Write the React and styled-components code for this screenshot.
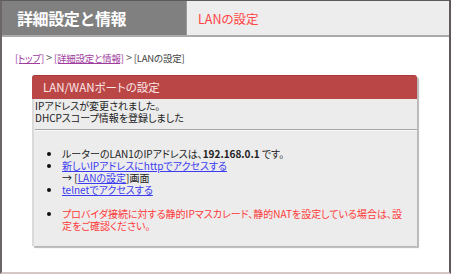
import React from "react";
import styled, { createGlobalStyle } from "styled-components";

const Global = createGlobalStyle`
  html, body { margin: 0; padding: 0; background: #fff; }
  body {
    font-family: "Noto Sans CJK JP", "Noto Sans", sans-serif;
    font-feature-settings: "palt";
  }
`;

const Frame = styled.div`
  width: 451px;
  height: 274px;
  box-sizing: border-box;
  border-top: 1px solid #5e5a5a;
  border-left: 2px solid #6a6666;
  border-right: 2px solid #5e5a5a;
  border-bottom: 2px solid #d6c6c6;
  background: #fff;
  overflow: hidden;
`;

const Header = styled.div`
  display: flex;
  height: 34px;
  border-bottom: 2px solid #ababab;
`;

const TitleTab = styled.div`
  width: 169px;
  background: #808080;
  border-right: 1px solid #9a9a9a;
  display: flex;
  align-items: center;
  padding-left: 15px;
  color: #fff;
  font-weight: bold;
  font-size: 16px;
  letter-spacing: -0.4px;
  font-feature-settings: normal;
`;

const SubTab = styled.div`
  flex: 1;
  background: #ededed;
  display: flex;
  align-items: center;
  padding-left: 11px;
  color: #ff4545;
  font-size: 12.5px;
  padding-top: 1px;
`;

const Content = styled.div`
  padding: 14px 0 0 13px;
`;

const Crumbs = styled.div`
  font-size: 9.5px;
  line-height: 12px;
  color: #444;
  letter-spacing: -0.2px;
`;

const CrumbLink = styled.a`
  color: #a03ca0;
  text-decoration: underline;
`;

const Sep = styled.span`
  color: #666;
  font-size: 11px;
  margin: 0 2px;
`;

const Panel = styled.div`
  margin: 11px 0 0 17px;
  width: 385px;
  box-shadow: 2px 2px 1px #b8b8b8;
  border-radius: 3px 3px 0 0;
`;

const PanelHead = styled.div`
  height: 24px;
  box-sizing: border-box;
  background: #bb4646;
  border-top: 1px solid #a83a3a;
  border-radius: 3px 3px 0 0;
  padding-left: 11px;
  color: #fbe6e6;
  font-size: 11.5px;
  line-height: 23px;
`;

const PanelBody = styled.div`
  background: #ececec;
  border-left: 2px solid #dadada;
  padding: 1px 0 14px 1px;
  font-size: 10px;
  line-height: 12px;
  color: #222;
`;

const Rule = styled.hr`
  border: none;
  border-top: 1px solid #a8a8a8;
  border-bottom: 1px solid #f8f8f8;
  margin: 5px 0 17px 0;
`;

const List = styled.ul`
  margin: 0;
  padding-left: 27px;
  list-style: disc;
`;

const Item = styled.li`
  color: ${(p) => (p.$alert ? "#ff3a3a" : "#222")};
  margin-top: ${(p) => (p.$gap ? "12px" : "0")};
  padding-right: 4px;
  &::marker { color: #111; }
`;

const Link = styled.a`
  color: #3b3bf0;
  text-decoration: underline;
`;

const Ip = styled.b`
  font-weight: bold;
`;

export default function App() {
  return (
    <>
      <Global />
      <Frame>
        <Header>
          <TitleTab>詳細設定と情報</TitleTab>
          <SubTab>LANの設定</SubTab>
        </Header>
        <Content>
          <Crumbs>
            <CrumbLink href="#">[トップ]</CrumbLink>
            <Sep>&gt;</Sep>
            <CrumbLink href="#">[詳細設定と情報]</CrumbLink>
            <Sep>&gt;</Sep>
            [LANの設定]
          </Crumbs>
          <Panel>
            <PanelHead>LAN/WANポートの設定</PanelHead>
            <PanelBody>
              IPアドレスが変更されました。
              <br />
              DHCPスコープ情報を登録しました
              <Rule />
              <List>
                <Item>
                  ルーターのLAN1のIPアドレスは、<Ip>192.168.0.1</Ip> です。
                </Item>
                <Item>
                  <Link href="#">新しいIPアドレスにhttpでアクセスする</Link>
                  <br />→ [<Link href="#">LANの設定</Link>]画面
                </Item>
                <Item>
                  <Link href="#">telnetでアクセスする</Link>
                </Item>
                <Item $alert $gap>
                  プロバイダ接続に対する静的IPマスカレード、静的NATを設定している場合は、設
                  <br />
                  定をご確認ください。
                </Item>
              </List>
            </PanelBody>
          </Panel>
        </Content>
      </Frame>
    </>
  );
}
